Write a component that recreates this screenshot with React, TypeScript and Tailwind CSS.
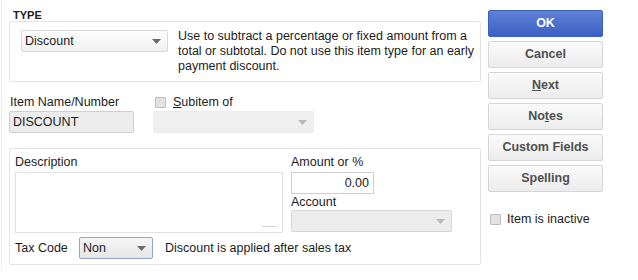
import React from "react";

function Arrow({ light = false }: { light?: boolean }) {
  return (
    <svg width="9" height="5" viewBox="0 0 9 5" className="shrink-0">
      <path d="M0 0h9L4.5 5z" fill={light ? "#b8b8b8" : "#6b6b6b"} />
    </svg>
  );
}

function Select({
  value,
  className,
  disabled = false,
}: {
  value?: string;
  className: string;
  disabled?: boolean;
}) {
  return (
    <div
      className={`shrink-0 flex items-center justify-between h-[22px] pl-[3px] pr-[6px] rounded-[2px] border ${className}`}
    >
      <span className="leading-none">{value}</span>
      <Arrow light={disabled} />
    </div>
  );
}

function Btn({ children, primary = false }: { children: React.ReactNode; primary?: boolean }) {
  return (
    <div
      className={
        primary
          ? "h-[27px] flex items-center justify-center rounded-[2px] border border-[#3b5fbf] bg-gradient-to-b from-[#5f82d8] to-[#3c60c3] text-white font-bold text-[12.5px]"
          : "h-[27px] flex items-center justify-center rounded-[2px] border border-[#d6d6d6] bg-gradient-to-b from-[#fafafa] to-[#ececec] text-[#505050] font-bold text-[12.5px]"
      }
    >
      {children}
    </div>
  );
}

function Check() {
  return <div className="w-[11px] h-[11px] shrink-0 rounded-[1px] border border-[#bdbdbd] bg-[#e2e2e2]" />;
}

export default function App() {
  return (
    <div className="w-[638px] h-[280px] bg-white overflow-hidden font-['Liberation_Sans',Arial,sans-serif] text-[12.5px] text-[#1c1c1c]">
      <div className="ml-[1px] h-[270px] border-l border-[#ececec] flex pl-[7px] pt-[10px] gap-[7px]">
        {/* left column */}
        <div className="w-[472px] flex flex-col">
          <div className="h-[11px] pl-[4px] text-[11px] font-bold leading-[11px] text-[#222]">TYPE</div>
          <div className="h-[61px] border border-[#e4e4e4] rounded-[2px] flex items-start pl-[11px] pt-[8px] gap-[10px]">
            <Select value="Discount" className="w-[147px] border-[#d9d9d9] bg-gradient-to-b from-[#fdfdfd] to-[#f1f1f1]" />
            <p className="w-[300px] mt-[-1px] leading-[15px] text-[#1c1c1c]">
              Use to subtract a percentage or fixed amount from a total or subtotal. Do not use this item type for an early
              payment discount.
            </p>
          </div>

          <div className="mt-[13px] flex gap-[19px]">
            <div className="flex flex-col">
              <div className="leading-[15px] pl-[1px]">Item Name/Number</div>
              <div className="mt-[1px] w-[125px] h-[22px] flex items-center pl-[3px] border border-[#cfcfcf] rounded-[2px] bg-[#ececec]">
                DISCOUNT
              </div>
            </div>
            <div className="flex flex-col">
              <div className="flex items-center gap-[7px] pl-[2px] leading-[15px]">
                <Check />
                <span>
                  <span className="underline">S</span>ubitem of
                </span>
              </div>
              <Select disabled className="mt-[1px] w-[161px] border-[#ececec] bg-[#efefef]" />
            </div>
          </div>

          <div className="mt-[15px] h-[117px] border border-[#e4e4e4] rounded-[2px] pl-[5px] pt-[6px] flex flex-col">
            <div className="flex gap-[8px]">
              <div className="flex flex-col">
                <div className="leading-[15px]">Description</div>
                <div className="mt-[2px] w-[268px] h-[61px] border border-[#e2e2e2] relative">
                  <div className="absolute right-[5px] bottom-[5px] w-[15px] h-px bg-[#d4d4d4]" />
                </div>
              </div>
              <div className="flex flex-col">
                <div className="leading-[15px]">Amount or %</div>
                <div className="mt-[2px] w-[83px] h-[22px] border border-[#cfcfcf] flex items-center justify-end pr-[4px]">
                  0.00
                </div>
                <div className="leading-[15px] mt-[1px]">Account</div>
                <Select disabled className="w-[161px] border-[#d6d6d6] bg-[#ececec]" />
              </div>
            </div>
            <div className="mt-[4px] flex items-center">
              <span className="w-[64px]">Tax Code</span>
              <Select value="Non" className="w-[74px] border-[#8ea6cf] bg-gradient-to-b from-[#f6f6f6] to-[#e6e6e6] pr-[6px]" />
              <span className="ml-[12px]">Discount is applied after sales tax</span>
            </div>
          </div>
        </div>

        {/* right column */}
        <div className="w-[115px] flex flex-col gap-[4px]">
          <Btn primary>OK</Btn>
          <Btn>Cancel</Btn>
          <Btn>
            <span>
              <span className="underline">N</span>ext
            </span>
          </Btn>
          <Btn>
            <span>
              No<span className="underline">t</span>es
            </span>
          </Btn>
          <Btn>Custom Fields</Btn>
          <Btn>Spelling</Btn>
          <div className="mt-[16px] flex items-center gap-[6px] pl-[2px] leading-[15px]">
            <Check />
            <span>Item is inactive</span>
          </div>
        </div>
      </div>
    </div>
  );
}
